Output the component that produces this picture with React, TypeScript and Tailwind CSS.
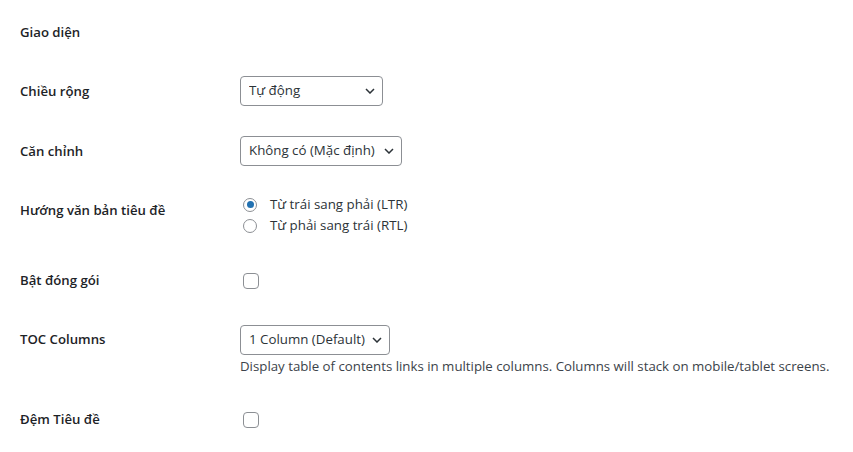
import {useState} from "react";

const font = {fontFamily: '"Open Sans", "Noto Sans", sans-serif'};

function Chevron() {
  return (
    <svg
      viewBox="0 0 10 6"
      className="pointer-events-none absolute right-[8px] top-1/2 h-[6px] w-[10px] -translate-y-1/2"
      fill="none"
      stroke="#2c3338"
      strokeWidth="1.5"
    >
      <polyline points="1,1 5,5 9,1" />
    </svg>
  );
}

function Select({options, width}: {options: string[]; width: string}) {
  return (
    <div className={`relative ${width}`}>
      <select
        className="h-[30px] w-full appearance-none rounded-[4px] border border-[#8c8f94] bg-white pl-[8px] pr-[22px] text-[13.3px] text-[#2c3338] outline-none"
        style={font}
      >
        {options.map((o) => (
          <option key={o}>{o}</option>
        ))}
      </select>
      <Chevron />
    </div>
  );
}

function Checkbox() {
  const [on, setOn] = useState(false);
  return (
    <button
      type="button"
      onClick={() => setOn(!on)}
      className="ml-[3px] flex size-[16px] items-center justify-center rounded-[4px] border border-[#8c8f94] bg-white"
    >
      {on && <span className="size-[8px] bg-[#2271b1]" />}
    </button>
  );
}

function Radio({checked, label}: {checked: boolean; label: string}) {
  return (
    <label className="flex h-[21px] items-center gap-[13px] pl-[3px] text-[13.3px] text-[#2c3338]">
      <span className="flex size-[14px] items-center justify-center rounded-full border border-[#8c8f94] bg-white">
        {checked && <span className="size-[7px] rounded-full bg-[#2271b1]" />}
      </span>
      {label}
    </label>
  );
}

function Row({
  label,
  labelPt,
  controlPt,
  height,
  children,
}: {
  label: string;
  labelPt: string;
  controlPt: string;
  height: string;
  children?: React.ReactNode;
}) {
  return (
    <div className={`flex ${height}`}>
      <div
        className={`w-[240px] shrink-0 pl-[20px] text-[13.2px] font-semibold leading-[20px] text-[#1d2327] ${labelPt}`}
      >
        {label}
      </div>
      <div className={`flex flex-col ${controlPt}`}>{children}</div>
    </div>
  );
}

export default function App() {
  return (
    <div className="h-[452px] w-[853px] overflow-hidden bg-white" style={font}>
      <Row label="Giao diện" labelPt="pt-[22px]" controlPt="" height="h-[61px]" />
      <Row label="Chiều rộng" labelPt="pt-[20px]" controlPt="pt-[15px]" height="h-[60px]">
        <Select options={["Tự động"]} width="w-[143px]" />
      </Row>
      <Row label="Căn chỉnh" labelPt="pt-[20px]" controlPt="pt-[15px]" height="h-[60px]">
        <Select options={["Không có (Mặc định)"]} width="w-[162px]" />
      </Row>
      <Row label="Hướng văn bản tiêu đề" labelPt="pt-[19px]" controlPt="pt-[13px]" height="h-[70px]">
        <Radio checked label="Từ trái sang phải (LTR)" />
        <Radio checked={false} label="Từ phải sang trái (RTL)" />
      </Row>
      <Row label="Bật đóng gói" labelPt="pt-[19px]" controlPt="pt-[22px]" height="h-[59px]">
        <Checkbox />
      </Row>
      <Row label="TOC Columns" labelPt="pt-[19px]" controlPt="pt-[15px]" height="h-[80px]">
        <Select options={["1 Column (Default)"]} width="w-[150px]" />
        <p className="mt-[2px] text-[13.25px] leading-[18px] text-[#3c434a]">
          Display table of contents links in multiple columns. Columns will stack on
          mobile/tablet screens.
        </p>
      </Row>
      <Row label="Đệm Tiêu đề" labelPt="pt-[19px]" controlPt="pt-[22px]" height="h-[60px]">
        <Checkbox />
      </Row>
    </div>
  );
}
